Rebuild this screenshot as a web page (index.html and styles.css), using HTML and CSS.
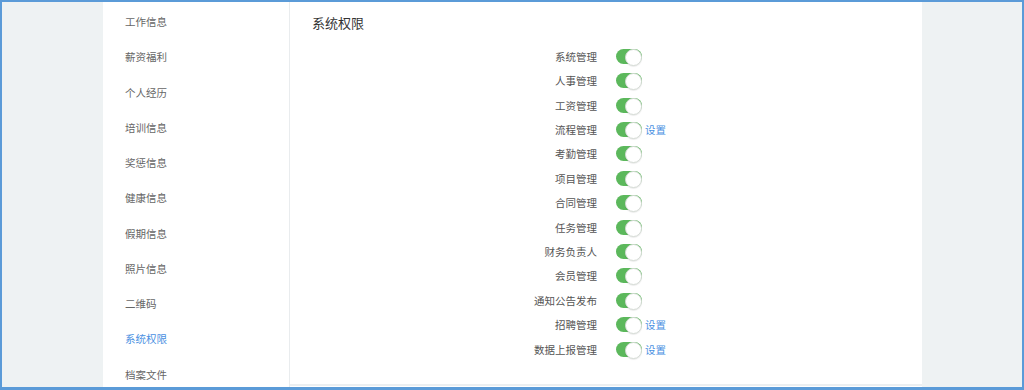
FILE: index.html
```html
<!DOCTYPE html>
<html lang="zh">
<head>
<meta charset="utf-8">
<link rel="stylesheet" href="styles.css">
</head>
<body>
<div class="frame">
  <div class="panel">
    <ul class="sidebar">
      <li>工作信息</li>
      <li>薪资福利</li>
      <li>个人经历</li>
      <li>培训信息</li>
      <li>奖惩信息</li>
      <li>健康信息</li>
      <li>假期信息</li>
      <li>照片信息</li>
      <li>二维码</li>
      <li class="active">系统权限</li>
      <li>档案文件</li>
    </ul>
    <div class="content">
      <h2 class="title">系统权限</h2>
      <div class="rows">
        <div class="row"><span class="label">系统管理</span><span class="switch"></span></div>
        <div class="row"><span class="label">人事管理</span><span class="switch"></span></div>
        <div class="row"><span class="label">工资管理</span><span class="switch"></span></div>
        <div class="row"><span class="label">流程管理</span><span class="switch"></span><a class="setting">设置</a></div>
        <div class="row"><span class="label">考勤管理</span><span class="switch"></span></div>
        <div class="row"><span class="label">项目管理</span><span class="switch"></span></div>
        <div class="row"><span class="label">合同管理</span><span class="switch"></span></div>
        <div class="row"><span class="label">任务管理</span><span class="switch"></span></div>
        <div class="row"><span class="label">财务负责人</span><span class="switch"></span></div>
        <div class="row"><span class="label">会员管理</span><span class="switch"></span></div>
        <div class="row"><span class="label">通知公告发布</span><span class="switch"></span></div>
        <div class="row"><span class="label">招聘管理</span><span class="switch"></span><a class="setting">设置</a></div>
        <div class="row"><span class="label">数据上报管理</span><span class="switch"></span><a class="setting">设置</a></div>
      </div>
    </div>
  </div>
</div>
</body>
</html>
```

FILE: styles.css
```css
* { box-sizing: border-box; }
html, body { margin: 0; padding: 0; }
body {
  font-family: "Noto Sans CJK SC", "Noto Sans", sans-serif;
  width: 1024px;
  height: 390px;
  overflow: hidden;
}
.frame {
  width: 1024px;
  height: 390px;
  border: 2px solid #5b9bd8;
  border-bottom-width: 3px;
  background: #eef2f3;
  padding-left: 101px;
  display: flex;
}
.panel {
  width: 819px;
  height: 100%;
  display: flex;
  background: #fff;
}
.sidebar {
  list-style: none;
  margin: 0;
  padding: 2px 0 0 0;
  width: 187px;
  border-right: 1px solid #e9ecee;
  flex-shrink: 0;
}
.sidebar li {
  height: 35.25px;
  line-height: 35.25px;
  padding-left: 22px;
  font-size: 10.5px;
  color: #666;
}
.sidebar li.active { color: #4a90e2; }
.content {
  flex: 1;
  padding: 11px 0 0 22px;
  border-bottom: 2px solid #eceff1;
  height: 384px;
}
.title {
  margin: 0 0 11px 0;
  font-size: 13px;
  line-height: 20px;
  font-weight: normal;
  color: #333;
}
.rows {
  display: flex;
  flex-direction: column;
}
.row {
  height: 24.42px;
  display: flex;
  align-items: center;
}
.label {
  width: 285px;
  text-align: right;
  font-size: 10.5px;
  color: #555;
}
.switch {
  margin-left: 19px;
  width: 26px;
  height: 15px;
  border-radius: 8px;
  background: #5cb85c;
  position: relative;
  flex-shrink: 0;
}
.switch::after {
  content: "";
  position: absolute;
  right: 0;
  top: 0;
  width: 15px;
  height: 15px;
  border-radius: 50%;
  background: #fff;
  border: 1px solid #d6dcd6;
  box-shadow: 0 1px 1px rgba(0,0,0,0.08);
}
.setting {
  margin-left: 3px;
  font-size: 10.5px;
  color: #4a90e2;
}
```
